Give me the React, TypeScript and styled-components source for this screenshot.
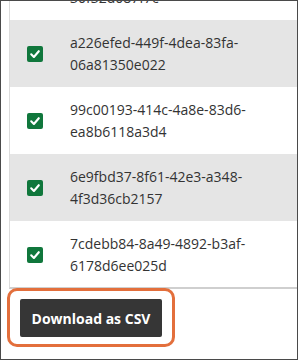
import React from 'react';
import styled, { createGlobalStyle } from 'styled-components';

const GlobalStyle = createGlobalStyle`
  html, body {
    margin: 0;
    padding: 0;
    background: #ffffff;
  }
  * {
    box-sizing: border-box;
  }
`;

const StyledFrame = styled.div`
  width: 298px;
  height: 360px;
  border: 1px solid #4a4a4a;
  background: #ffffff;
  overflow: hidden;
  display: flex;
  flex-direction: column;
  font-family: 'Open Sans', 'Liberation Sans', sans-serif;
`;

const StyledListWindow = styled.div`
  height: 288px;
  margin-left: 8px;
  margin-right: -20px;
  border-left: 1px solid #dcdcdc;
  border-bottom: 2px solid #cfcfcf;
  overflow: hidden;
  flex-shrink: 0;
`;

// the list is scrolled, the first row is cut at the top
const StyledList = styled.div`
  display: flex;
  flex-direction: column;
  margin-top: -48px;
`;

const StyledRow = styled.div<{ $shaded: boolean }>`
  height: 67px;
  display: flex;
  align-items: center;
  gap: 27px;
  padding-left: 17px;
  background: ${(p) => (p.$shaded ? '#e5e5e5' : '#ffffff')};
`;

const StyledCheckbox = styled.span`
  width: 16px;
  height: 16px;
  border-radius: 2px;
  background: #10773c;
  display: flex;
  align-items: center;
  justify-content: center;
  flex-shrink: 0;
`;

const StyledId = styled.div`
  font-size: 14px;
  line-height: 22px;
  color: #333333;
  width: 180px;
`;

const StyledHighlight = styled.div`
  align-self: flex-start;
  margin-left: 6px;
  margin-top: -1px;
  padding: 8px 10px 7px 10px;
  border: 3px solid #e36f3c;
  border-radius: 10px;
`;

const StyledButton = styled.button`
  width: 142px;
  height: 38px;
  border: none;
  border-radius: 2px;
  background: #363636;
  color: #ffffff;
  font-family: 'Open Sans', 'Liberation Sans', sans-serif;
  font-size: 14px;
  font-weight: 700;
  padding: 0;
  cursor: pointer;
`;

const ids: [string, string][] = [
  ['5be1c9d4-0e2a-4b7c-9f15-', '30f32d087f7c'],
  ['a226efed-449f-4dea-83fa-', '06a81350e022'],
  ['99c00193-414c-4a8e-83d6-', 'ea8b6118a3d4'],
  ['6e9fbd37-8f61-42e3-a348-', '4f3d36cb2157'],
  ['7cdebb84-8a49-4892-b3af-', '6178d6ee025d'],
];

const CheckIcon = () => (
  <svg width="12" height="12" viewBox="0 0 12 12" fill="none">
    <polyline
      points="2.2,6.3 4.9,9 9.8,3.2"
      stroke="#ffffff"
      strokeWidth="2.1"
      strokeLinecap="round"
      strokeLinejoin="round"
    />
  </svg>
);

const App = () => (
  <>
    <GlobalStyle />
    <StyledFrame>
      <StyledListWindow>
        <StyledList>
          {ids.map(([first, second], i) => (
            <StyledRow key={first} $shaded={i % 2 === 1}>
              <StyledCheckbox>
                <CheckIcon />
              </StyledCheckbox>
              <StyledId>
                {first}
                <br />
                {second}
              </StyledId>
            </StyledRow>
          ))}
        </StyledList>
      </StyledListWindow>
      <StyledHighlight>
        <StyledButton type="button">Download as CSV</StyledButton>
      </StyledHighlight>
    </StyledFrame>
  </>
);

export default App;
